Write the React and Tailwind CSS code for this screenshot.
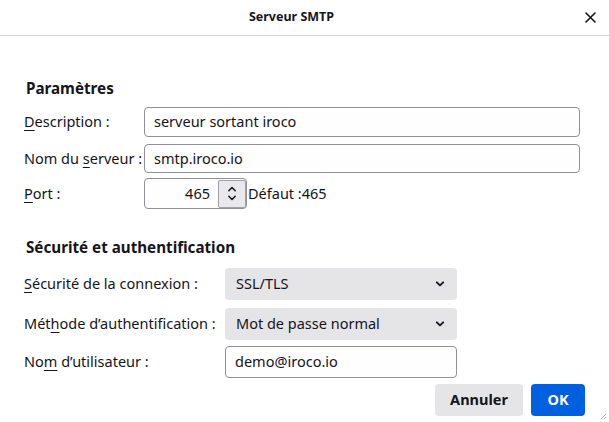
import React from "react";

function Chevron() {
  return (
    <svg width="10" height="6" viewBox="0 0 10 6" className="shrink-0">
      <path d="M1.8 1.3 L5 4.4 L8.2 1.3" fill="none" stroke="#15141a" strokeWidth="1.8" strokeLinecap="round" strokeLinejoin="round" />
    </svg>
  );
}

function Label({ children, w }) {
  return <div className={"shrink-0 text-[14.5px] " + w}>{children}</div>;
}

function U({ children }) {
  return <span className="underline underline-offset-[3px] decoration-[1px]">{children}</span>;
}

export default function App() {
  return (
    <div className="w-[609px] h-[422px] bg-white text-[#15141a] font-['Noto_Sans',sans-serif] relative overflow-hidden">
      <header className="h-[36px] border-b border-[#d4d4d8] flex items-center justify-center relative">
        <span className="font-bold text-[12.5px] pr-[26px] -mt-[1px]">Serveur SMTP</span>
        <button className="absolute right-[13px] top-[12px]">
          <svg width="11" height="11" viewBox="0 0 11 11">
            <path d="M1 1 L10 10 M10 1 L1 10" stroke="#15141a" strokeWidth="1.6" strokeLinecap="round" />
          </svg>
        </button>
      </header>

      <div className="pl-[24px] pr-[29px]">
        <h2 className="font-bold text-[15.2px] leading-[22px] pl-[2px] mt-[41px]">Paramètres</h2>

        <div className="flex items-center mt-[8px]">
          <Label w="w-[120px]"><U>D</U>escription :</Label>
          <div className="flex-1 h-[30px] border border-[#8f8f9d] rounded-[4px] bg-[#fefefe] px-[9px] flex items-center text-[14.5px]">
            serveur sortant iroco
          </div>
        </div>
        <div className="flex items-center mt-[7px]">
          <Label w="w-[120px]">Nom du <U>s</U>erveur :</Label>
          <div className="flex-1 h-[29px] border border-[#8f8f9d] rounded-[4px] bg-[#fefefe] px-[9px] flex items-center text-[14.5px]">
            smtp.iroco.io
          </div>
        </div>
        <div className="flex items-center mt-[5px]">
          <Label w="w-[120px]"><U>P</U>ort :</Label>
          <div className="w-[103px] h-[31px] border border-[#8f8f9d] rounded-[4px] bg-[#fefefe] flex items-center">
            <span className="flex-1 text-right pr-[8px] text-[14.5px]">465</span>
            <div className="w-[28px] h-[28px] border border-[#a0a0a8] bg-[#e9e9ed] rounded-[2px] flex flex-col items-center justify-center gap-[3px]">
              <svg width="10" height="6" viewBox="0 0 10 6">
                <path d="M1.8 4.7 L5 1.5 L8.2 4.7" fill="none" stroke="#15141a" strokeWidth="1.5" strokeLinecap="round" strokeLinejoin="round" />
              </svg>
              <svg width="10" height="6" viewBox="0 0 10 6">
                <path d="M1.8 1.3 L5 4.5 L8.2 1.3" fill="none" stroke="#15141a" strokeWidth="1.5" strokeLinecap="round" strokeLinejoin="round" />
              </svg>
            </div>
          </div>
          <span className="text-[14.5px] ml-[1px]">Défaut :465</span>
        </div>

        <h2 className="font-bold text-[15.2px] leading-[22px] pl-[2px] mt-[27px]">Sécurité et authentification</h2>

        <div className="flex items-center mt-[10px]">
          <Label w="w-[201px]"><U>S</U>écurité de la connexion :</Label>
          <div className="w-[232px] h-[32px] rounded-[4px] bg-[#e5e5e8] pl-[11px] pr-[12px] flex items-center justify-between text-[14.5px]">
            <span>SSL/TLS</span>
            <Chevron />
          </div>
        </div>
        <div className="flex items-center mt-[8px]">
          <Label w="w-[201px]">Mét<U>h</U>ode d’authentification :</Label>
          <div className="w-[232px] h-[32px] rounded-[4px] bg-[#e5e5e8] pl-[11px] pr-[12px] flex items-center justify-between text-[14.5px]">
            <span>Mot de passe normal</span>
            <Chevron />
          </div>
        </div>
        <div className="flex items-center mt-[6px]">
          <Label w="w-[201px]">No<U>m</U> d’utilisateur :</Label>
          <div className="w-[232px] h-[32px] border border-[#8f8f9d] rounded-[4px] bg-[#fefefe] px-[9px] flex items-center text-[14.5px]">
            demo@iroco.io
          </div>
        </div>

        <div className="flex justify-end gap-[8px] mt-[6px] mr-[-5px]">
          <button className="w-[88px] h-[32px] rounded-[4px] bg-[#e5e5e8] font-bold text-[14.5px]">Annuler</button>
          <button className="w-[54px] h-[32px] rounded-[4px] bg-[#0061e0] text-white font-bold text-[14.5px]">OK</button>
        </div>
      </div>

      <svg className="absolute right-[2px] bottom-[2px]" width="8" height="8" viewBox="0 0 8 8">
        <path d="M7 2 L2 7 M7 5 L5 7" stroke="#b0b0b6" strokeWidth="1" />
      </svg>
    </div>
  );
}
